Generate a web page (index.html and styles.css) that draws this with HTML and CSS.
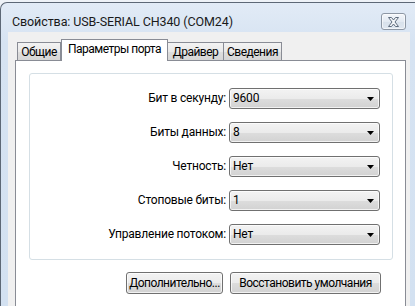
FILE: index.html
```html
<!DOCTYPE html>
<html lang="ru">
<head>
<meta charset="utf-8">
<title>Свойства</title>
<link rel="stylesheet" href="styles.css">
</head>
<body>
<div class="window">
  <div class="titlebar">
    <span class="title">Свойства: USB-SERIAL CH340 (COM24)</span>
    <span class="close">
      <svg width="13" height="10" viewBox="0 0 13 10"><path d="M1.5,0.5 L4.5,0.5 L6.5,3 L8.5,0.5 L11.5,0.5 L8,5 L11.5,9.5 L8.5,9.5 L6.5,7 L4.5,9.5 L1.5,9.5 L5,5 Z" fill="#f4f6f9" stroke="#5f6d7e" stroke-width="1" stroke-linejoin="round"/></svg>
    </span>
  </div>
  <div class="client">
    <div class="tabs">
      <div class="tab t1">Общие</div>
      <div class="tab active t2">Параметры порта</div>
      <div class="tab t3">Драйвер</div>
      <div class="tab t4">Сведения</div>
    </div>
    <div class="panel">
      <div class="group">
        <div class="form">
          <span class="label">Бит в секунду:</span>
          <div class="combo"><span class="value">9600</span><svg class="arrow" width="7" height="4" viewBox="0 0 7 4"><path d="M0,0 L7,0 L3.5,4 Z" fill="#000"/></svg></div>
          <span class="label">Биты данных:</span>
          <div class="combo"><span class="value">8</span><svg class="arrow" width="7" height="4" viewBox="0 0 7 4"><path d="M0,0 L7,0 L3.5,4 Z" fill="#000"/></svg></div>
          <span class="label">Четность:</span>
          <div class="combo"><span class="value">Нет</span><svg class="arrow" width="7" height="4" viewBox="0 0 7 4"><path d="M0,0 L7,0 L3.5,4 Z" fill="#000"/></svg></div>
          <span class="label">Стоповые биты:</span>
          <div class="combo"><span class="value">1</span><svg class="arrow" width="7" height="4" viewBox="0 0 7 4"><path d="M0,0 L7,0 L3.5,4 Z" fill="#000"/></svg></div>
          <span class="label">Управление потоком:</span>
          <div class="combo"><span class="value">Нет</span><svg class="arrow" width="7" height="4" viewBox="0 0 7 4"><path d="M0,0 L7,0 L3.5,4 Z" fill="#000"/></svg></div>
        </div>
      </div>
      <div class="buttons">
        <button class="btn b1">Дополнительно...</button>
        <button class="btn b2">Восстановить умолчания</button>
      </div>
    </div>
  </div>
</div>
</body>
</html>
```

FILE: styles.css
```css
html, body {
  margin: 0;
  padding: 0;
  width: 415px;
  height: 306px;
  overflow: hidden;
  background: #eef2f7;
}
body {
  font-family: Roboto, "Noto Sans", "Liberation Sans", sans-serif;
  font-size: 12px;
  letter-spacing: -0.2px;
  color: #000;
}
.window {
  box-sizing: border-box;
  margin-top: 2px;
  height: 304px;
  border-top: 1px solid #5d6876;
  border-left: 1px solid #5d6876;
  border-top-left-radius: 7px;
  background: linear-gradient(#e2ebf6, #d6e3f2 40px, #d3e1f1);
  display: flex;
  flex-direction: column;
}
.titlebar {
  box-sizing: border-box;
  height: 29px;
  padding: 10px 9px 0 11px;
  display: flex;
  justify-content: space-between;
  align-items: flex-start;
}
.title {
  line-height: 18px;
  color: #1a1a1a;
  font-size: 12.5px;
  letter-spacing: -0.1px;
}
.close {
  box-sizing: border-box;
  width: 25px;
  height: 17px;
  border: 1px solid #8d97a4;
  border-radius: 3px;
  background: linear-gradient(#f3f6fa, #e3eaf2 50%, #d8e1eb 51%, #dfe7f0);
  box-shadow: inset 0 0 0 1px rgba(255,255,255,0.6);
  display: flex;
  align-items: center;
  justify-content: center;
}
.client {
  flex: 1;
  margin: 0 5px 0 7px;
  background: #f0f0f0;
  padding: 7px 4px 0 7px;
  display: flex;
  flex-direction: column;
}
.tabs {
  display: flex;
  align-items: flex-end;
  padding-left: 2px;
}
.tab {
  box-sizing: border-box;
  height: 18px;
  border: 1px solid #898c95;
  border-bottom: none;
  background: linear-gradient(#f3f3f3, #e9e9e9 50%, #dedede 51%, #d6d6d6);
  text-align: center;
  line-height: 16px;
  padding-top: 1px;
  white-space: nowrap;
  letter-spacing: -0.5px;
}
.tab.active {
  height: 22px;
  margin-bottom: -1px;
  background: #fff;
  position: relative;
  z-index: 1;
  padding-top: 1px;
}
.t1 { width: 44px; }
.t2 { width: 107px; }
.t3 { width: 57px; margin-left: -1px; }
.t4 { width: 59px; margin-left: -1px; }
.panel {
  flex: 1;
  border: 1px solid #898c95;
  border-bottom: none;
  background: #fff;
}
.group {
  box-sizing: border-box;
  height: 187px;
  margin: 12px 12px 0 13px;
  border: 1px solid #d5dfe5;
  border-radius: 3px;
  padding: 14px 12px 0 0;
}
.form {
  display: grid;
  grid-template-columns: 1fr 151px;
  column-gap: 3px;
  row-gap: 13px;
}
.label {
  text-align: right;
  line-height: 21px;
  white-space: nowrap;
}
.combo, .btn {
  box-sizing: border-box;
  border: 1px solid #707070;
  border-radius: 3px;
  background: linear-gradient(#f3f3f3, #ebebeb 50%, #dddddd 51%, #d2d2d2);
  box-shadow: inset 0 0 0 1px rgba(255,255,255,0.7);
}
.combo {
  height: 21px;
  display: flex;
  align-items: center;
  justify-content: space-between;
  padding: 0 5px 0 3px;
}
.value {
  line-height: 19px;
}
.buttons {
  margin-top: 12px;
  padding-right: 24px;
  display: flex;
  justify-content: flex-end;
  gap: 7px;
}
.btn {
  height: 22px;
  font: inherit;
  letter-spacing: -0.5px;
  color: #000;
  padding: 0;
  white-space: nowrap;
}
.b1 { width: 97px; }
.b2 { width: 151px; }
```
